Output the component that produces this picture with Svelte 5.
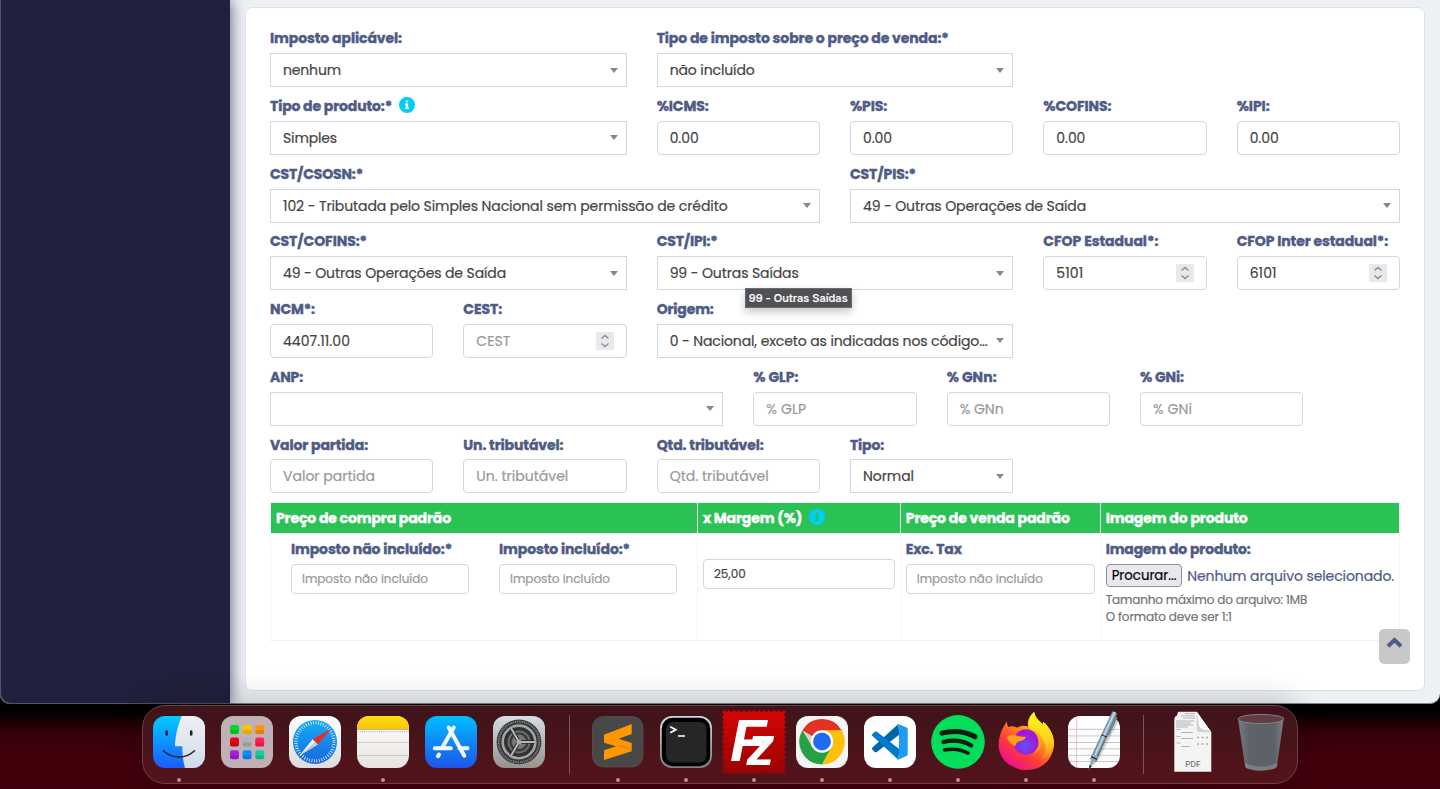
<script>
  const rows = [
    [
      { span: 4, label: 'Imposto aplicável:', lw: 132, kind: 'select', value: 'nenhum', vw: 58 },
      { span: 4, label: 'Tipo de imposto sobre o preço de venda:*', lw: 292, kind: 'select', value: 'não incluído', vw: 85 }
    ],
    [
      { span: 4, label: 'Tipo de produto:*', lw: 122, info: true, kind: 'select', value: 'Simples', vw: 54 },
      { span: 2, label: '%ICMS:', lw: 52, kind: 'input', value: '0.00', vw: 29 },
      { span: 2, label: '%PIS:', lw: 37, kind: 'input', value: '0.00', vw: 29 },
      { span: 2, label: '%COFINS:', lw: 68, kind: 'input', value: '0.00', vw: 29 },
      { span: 2, label: '%IPI:', lw: 33, kind: 'input', value: '0.00', vw: 29 }
    ],
    [
      { span: 6, label: 'CST/CSOSN:*', lw: 93, kind: 'select', value: '102 - Tributada pelo Simples Nacional sem permissão de crédito', vw: 444.5 },
      { span: 6, label: 'CST/PIS:*', lw: 66, kind: 'select', value: '49 - Outras Operações de Saída', vw: 223 }
    ],
    [
      { span: 4, label: 'CST/COFINS:*', lw: 97, kind: 'select', value: '49 - Outras Operações de Saída', vw: 223 },
      { span: 4, label: 'CST/IPI:*', lw: 61, kind: 'select', value: '99 - Outras Saídas', vw: 129, tip: true },
      { span: 2, label: 'CFOP Estadual*:', lw: 115, kind: 'number', value: '5101', vw: 27 },
      { span: 2, label: 'CFOP Inter estadual*:', lw: 151.5, kind: 'number', value: '6101', vw: 27 }
    ],
    [
      { span: 2, label: 'NCM*:', lw: 45, kind: 'input', value: '4407.11.00', vw: 67 },
      { span: 2, label: 'CEST:', lw: 39, kind: 'number', placeholder: 'CEST', vw: 34 },
      { span: 4, label: 'Origem:', lw: 57, kind: 'select', value: '0 - Nacional, exceto as indicadas nos código...', vw: 318 }
    ],
    [
      { span: 5, label: 'ANP:', lw: 33, kind: 'select', value: '', vw: 0 },
      { span: 2, label: '% GLP:', lw: 45, kind: 'input', placeholder: '% GLP', vw: 40 },
      { span: 2, label: '% GNn:', lw: 50, kind: 'input', placeholder: '% GNn', vw: 44 },
      { span: 2, label: '% GNi:', lw: 44, kind: 'input', placeholder: '% GNi', vw: 39 }
    ],
    [
      { span: 2, label: 'Valor partida:', lw: 98, kind: 'input', placeholder: 'Valor partida', vw: 92 },
      { span: 2, label: 'Un. tributável:', lw: 100, kind: 'input', placeholder: 'Un. tributável', vw: 92 },
      { span: 2, label: 'Qtd. tributável:', lw: 107, kind: 'input', placeholder: 'Qtd. tributável', vw: 99 },
      { span: 2, label: 'Tipo:', lw: 34, kind: 'select', value: 'Normal', vw: 51 }
    ]
  ];

  const tiles = [
    ['#00d92c', '#ffc400', '#ff9500'],
    ['#e40613', '#a9b3b8', '#ff1f52'],
    ['#a51fd9', '#0a8cff', '#17cf98']
  ];
  const dockGroups = [
    [
      { id: 'finder', open: true },
      { id: 'launchpad' },
      { id: 'safari' },
      { id: 'notes', open: true },
      { id: 'appstore' },
      { id: 'settings' }
    ],
    [
      { id: 'sublime', open: true },
      { id: 'terminal', open: true },
      { id: 'filezilla', open: true },
      { id: 'chrome', open: true },
      { id: 'vscode', open: true },
      { id: 'spotify', open: true },
      { id: 'firefox', open: true },
      { id: 'textedit', open: true }
    ],
    [{ id: 'pdf' }, { id: 'trash' }]
  ];

  // Tracks a run of text so that it fills the given width.
  function fit(node, width) {
    const natural = node.getBoundingClientRect().width;
    const n = node.textContent.length;
    if (width && n) node.style.letterSpacing = `${(width - natural) / n}px`;
  }
</script>

{#snippet info()}
  <svg class="info" viewBox="0 0 16 16"><path fill-rule="evenodd" d="M8 0a8 8 0 1 1 0 16A8 8 0 0 1 8 0ZM6.9 3.4v2.2h2.2V3.4ZM6 6.6v1.3h.8v2.9H6v1.3h4v-1.3h-.8V6.6Z" /></svg>
{/snippet}

<div class="desktop">
  <div class="window">
    <aside></aside>
    <main>
      <section class="card">
        {#each rows as row}
          <div class="row">
            {#each row as f}
              <div class="field s{f.span}">
                <div class="label"><span use:fit={f.lw}>{f.label}</span>{#if f.info}{@render info()}{/if}</div>
                <div class="control {f.kind}" class:muted={f.placeholder}>
                  <span use:fit={f.vw}>{f.value ?? f.placeholder}</span>
                  {#if f.kind === 'select'}<i class="caret"></i>{/if}
                  {#if f.kind === 'number'}
                    <svg class="spin" viewBox="0 0 18 18"><path d="M5.5 6.5 9 3.5l3.5 3M5.5 11.5l3.5 3 3.5-3" /></svg>
                  {/if}
                  {#if f.tip}<div class="tooltip"><span use:fit={99}>{f.value}</span></div>{/if}
                </div>
              </div>
            {/each}
          </div>
        {/each}

        <div class="table">
          <div class="th"><span use:fit={175}>Preço de compra padrão</span></div>
          <div class="th"><span use:fit={99.5}>x Margem (%)</span>{@render info()}</div>
          <div class="th"><span use:fit={164}>Preço de venda padrão</span></div>
          <div class="th"><span use:fit={142}>Imagem do produto</span></div>
          <div class="td pair">
            <div>
              <div class="label"><span use:fit={161}>Imposto não incluído:*</span></div>
              <div class="control small muted"><span use:fit={126}>Imposto não incluído</span></div>
            </div>
            <div>
              <div class="label"><span use:fit={131}>Imposto incluído:*</span></div>
              <div class="control small muted"><span use:fit={100}>Imposto incluído</span></div>
            </div>
          </div>
          <div class="td margin">
            <div class="control small"><span use:fit={32}>25,00</span></div>
          </div>
          <div class="td">
            <div class="label"><span use:fit={56}>Exc. Tax</span></div>
            <div class="control small muted"><span use:fit={126}>Imposto não incluído</span></div>
          </div>
          <div class="td">
            <div class="label"><span use:fit={145}>Imagem do produto:</span></div>
            <div class="file">
              <button><span use:fit={65}>Procurar...</span></button>
              <span use:fit={207}>Nenhum arquivo selecionado.</span>
            </div>
            <p><span use:fit={201.5}>Tamanho máximo do arquivo: 1MB</span></p>
            <p><span use:fit={126}>O formato deve ser 1:1</span></p>
          </div>
        </div>
      </section>
      <div class="totop">
        <svg viewBox="0 0 17 12"><path d="M2 9.200 8.500 3l6.500 6.200" /></svg>
      </div>
    </main>
  </div>

  <nav class="dock">
    {#each dockGroups as group, g}
      {#if g > 0}<div class="sep" class:last={g === 2}></div>{/if}
      {#each group as app}
        <div class="app">
          <svg viewBox="0 0 68 68">
            {#if app.id === 'finder'}
              <defs>
                <linearGradient id="fa" x2="0" y2="1"><stop stop-color="#00cbff" /><stop offset="1" stop-color="#1c5cff" /></linearGradient>
                <linearGradient id="fb" x2="0" y2="1"><stop stop-color="#f1f0f3" /><stop offset="1" stop-color="#d0dbe8" /></linearGradient>
                <clipPath id="sq"><rect x="8" y="8" width="52" height="52" rx="12" /></clipPath>
              </defs>
              <g clip-path="url(#sq)">
                <path fill="url(#fa)" d="M8 8h52v52H8z" />
                <path fill="url(#fb)" d="M36.7 8C33 17 30.300 27 30 38.300h7.300C37.300 45 38 53 40 60h20V8Z" />
              </g>
              <path fill="none" stroke="#202733" stroke-width="2.600" stroke-linecap="round" d="M21.700 23.500v2.900M46.200 23.500v2.900" />
              <path fill="none" stroke="#202733" stroke-width="1.600" stroke-linecap="round" d="M18.500 42.800c8.500 8.400 22.500 8.400 31 0" />
            {:else if app.id === 'launchpad'}
              <rect x="8" y="8" width="52" height="52" rx="12" fill="#bfb1b5" />
              {#each tiles as line, r}
                {#each line as c, k}
                  <rect x={17 + k * 12.6} y={17 + r * 12.6} width="9" height="9" rx="2.2" fill={c} />
                  <rect x={17 + k * 12.6} y={22 + r * 12.6} width="9" height="4" rx="2" fill="#000" opacity=".12" />
                {/each}
              {/each}
            {:else if app.id === 'safari'}
              <defs>
                <linearGradient id="sa" x2="0" y2="1"><stop stop-color="#fff" /><stop offset="1" stop-color="#dcdcdc" /></linearGradient>
                <linearGradient id="sb" x2="0" y2="1"><stop stop-color="#16adf3" /><stop offset="1" stop-color="#1767e0" /></linearGradient>
              </defs>
              <rect x="8" y="8" width="52" height="52" rx="12" fill="url(#sa)" />
              <circle cx="34" cy="33.900" r="22" fill="url(#sb)" />
              <circle cx="34" cy="33.900" r="19" fill="none" stroke="#e5f5ff" stroke-width="3.300" stroke-dasharray=".8 1.690" />
              <path fill="#ed2a22" d="m50.500 20.800-18.800 10.400 5 5.200Z" />
              <path fill="#f7f7f7" d="m18.500 47.500 13.200-16.300 5 5.200Z" />
              <path fill="#c3cbd3" d="m18.500 47.500 15.700-13.700 2.500 2.600Z" />
            {:else if app.id === 'notes'}
              <defs><linearGradient id="na" x2="0" y2="1"><stop stop-color="#fff" /><stop offset="1" stop-color="#e6e3df" /></linearGradient>
              <linearGradient id="nb" x2="0" y2="1"><stop stop-color="#ffdb16" /><stop offset="1" stop-color="#fcc800" /></linearGradient></defs>
              <g clip-path="url(#sq)">
                <path fill="url(#na)" d="M8 8h52v52H8z" />
                <path fill="url(#nb)" d="M8 8h52v13H8z" />
                <path stroke="#b79d58" stroke-width=".8" d="M8 21.400h52" />
                <path stroke="#aaa7a2" stroke-width="1.300" stroke-dasharray=".8 1.300" d="M9 23.600h51" />
                <path stroke="#c9c7c4" stroke-width=".8" d="M8 34.500h52M8 47.500h52" />
              </g>
            {:else if app.id === 'appstore'}
              <defs><linearGradient id="as" x2="0" y2="1"><stop stop-color="#00bdff" /><stop offset="1" stop-color="#1c55ea" /></linearGradient></defs>
              <rect x="8" y="8" width="52" height="52" rx="12" fill="url(#as)" />
              <path fill="none" stroke="#f4f9ff" stroke-width="4" stroke-linecap="round" d="M17.800 40.200h16M42.500 40.200h8M36.800 19.500 25.200 39.700M31.700 19.500l15.600 28.200M22 46.500l-1 1.700" />
            {:else if app.id === 'settings'}
              <defs><linearGradient id="se" x2="0" y2="1"><stop stop-color="#d5dee3" /><stop offset="1" stop-color="#96918e" /></linearGradient></defs>
              <rect x="8" y="8" width="52" height="52" rx="12" fill="url(#se)" />
              <circle cx="34" cy="33.900" r="22.400" fill="#38393a" />
              <circle cx="34" cy="33.900" r="20.300" fill="none" stroke="#98999a" stroke-width="2" stroke-dasharray=".8 1.060" />
              <circle cx="34" cy="33.900" r="18" fill="#303132" />
              <circle cx="34" cy="33.900" r="16.300" fill="none" stroke="#a4a5a6" stroke-width="2.600" />
              <circle cx="34" cy="33.900" r="11.500" fill="#6e7072" />
              <circle cx="34" cy="33.900" r="8.500" fill="none" stroke="#3a3c3d" stroke-width="2.400" />
              <circle cx="34" cy="33.900" r="6" fill="#77797b" />
              <path stroke="#2b2c2d" stroke-width="3.800" d="M34 33.900h15.500M34 33.900 26.200 20.500M34 33.900 26.200 47.300" />
              <path stroke="#b6b8b9" stroke-width="2" d="M34 33.900h16M34 33.900 26 20M34 33.900 26 47.800" />
              <circle cx="34" cy="33.900" r="2.500" fill="#aaacae" />
            {:else if app.id === 'sublime'}
              <rect x="8.500" y="8.500" width="50.500" height="50.500" rx="11" fill="#484848" stroke="#5c5556" stroke-width=".7" />
              <path fill="#ff9800" d="M47.700 16v10L34.700 30.700l13 4.300v8.200L20 51.900V42.300l12-4L20 34.700V26.800Z" />
              <path fill="#ee8700" d="m32 38.300 4.800-1.500 10.900 3.200v2.300Z" />
            {:else if app.id === 'terminal'}
              <defs><linearGradient id="te" x2="0" y2="1"><stop stop-color="#cfd9df" /><stop offset="1" stop-color="#83817f" /></linearGradient></defs>
              <rect x="8" y="8" width="52" height="52" rx="12" fill="url(#te)" />
              <rect x="9.800" y="9.800" width="48.400" height="48.400" rx="10.500" fill="#000" />
              <rect x="14" y="14" width="40.500" height="40.500" rx="6.500" fill="#262626" />
              <path fill="none" stroke="#fff" stroke-width="1.700" d="m18.200 18.800 5.600 3-5.600 3M26 28h7" />
            {:else if app.id === 'filezilla'}
              <defs><linearGradient id="fz" x2="0" y2="1"><stop stop-color="#d40505" /><stop offset="1" stop-color="#9d0202" /></linearGradient></defs>
              <rect x="3.800" y="3.800" width="60.400" height="60.400" fill="url(#fz)" />
              <rect x="4" y="4" width="60" height="60" fill="none" stroke="url(#fz)" stroke-width="3.400" stroke-linecap="round" stroke-dasharray="0 5" />
              <text class="fz"><tspan x="10" y="53" font-size="60">F</tspan><tspan x="26.500" y="57" font-size="56">z</tspan></text>
            {:else if app.id === 'chrome'}
              <rect x="8" y="8" width="52" height="52" rx="12" fill="#f5f3f3" />
              <circle cx="34" cy="34.200" r="22.600" fill="#d8d3d0" />
              <path fill="#e33122" d="M14.400 22.300A22.600 22.600 0 0 1 53.600 22.300L34 34Z" />
              <path fill="#ffc107" d="M53.600 22.300A22.600 22.600 0 0 1 34 56.200L43.600 39 34 22.300Z" />
              <path fill="#25a044" d="M34 56.200A22.600 22.600 0 0 1 14.400 22.300L24.500 39.200 43.600 39Z" />
              <circle cx="34" cy="33.500" r="11.200" fill="#fff" />
              <circle cx="34" cy="33.500" r="8.900" fill="#226af0" />
            {:else if app.id === 'vscode'}
              <rect x="8" y="8" width="52" height="52" rx="12" fill="#fff" />
              <path fill="#0065a9" d="m42.300 16 1.200 10.400-22.700 17.500c-.6.400-1.400.4-2 0l-2.300-2.100c-.7-.6-.7-1.600 0-2.200Z" />
              <path fill="#007acc" d="m42.300 51.700 1.200-10.400-22.700-17.500c-.6-.4-1.400-.4-2 0l-2.300 2.100c-.7.600-.7 1.600 0 2.200Z" />
              <path fill="#1f9cf0" d="M42.300 16c-.6.600-.4 1.200.6 1.800v32c-1 .6-1.200 1.300-.6 1.900l8.100-3.600c.8-.4 1.300-1 1.300-1.900V21.400c0-.9-.5-1.500-1.300-1.900Z" />
            {:else if app.id === 'spotify'}
              <circle cx="34" cy="33.900" r="26.800" fill="#02de5a" />
              <g fill="none" stroke="#111a14" stroke-linecap="round">
                <path stroke-width="5" d="M18 25.200c11.500-2.900 23.300-1.700 33 3.600" />
                <path stroke-width="4.300" d="M19.500 34c10-2.500 19.500-1.300 27.700 3.500" />
                <path stroke-width="3.500" d="M20.500 42c8.500-1.800 16.500-.8 23.700 3.200" />
              </g>
            {:else if app.id === 'firefox'}
              <defs>
                <linearGradient id="ff" x1=".85" y1=".1" x2=".25" y2=".95"><stop stop-color="#fff230" /><stop offset=".35" stop-color="#ff9a16" /><stop offset=".67" stop-color="#ff4036" /><stop offset="1" stop-color="#ee1189" /></linearGradient>
                <radialGradient id="fg" cx=".45" cy=".65"><stop stop-color="#654dfa" /><stop offset="1" stop-color="#a217d4" /></radialGradient>
                <linearGradient id="fh" x2="0" y2="1"><stop stop-color="#fff51b" /><stop offset=".6" stop-color="#ffd01d" /><stop offset="1" stop-color="#ff7a24" /></linearGradient>
              </defs>
              <path fill="url(#ff)" d="M14.800 13.500c.2 3 .8 4.300 1.800 5.400 2.800-.9 5.600-.7 8.400.8 4-2.400 7-2.600 11-1.200C35 12 38.500 6.500 42.200 4c.8 5 4 8 8.400 12 .7-.3.7-1.300.5-2.300C57.500 19 62 27 62 35.300 62 51 50 62 34.800 62S6.700 51.500 6.700 37c0-8 2.600-15.500 8.100-23.500Z" />
              <path fill="url(#fh)" d="M42.200 4c.8 5 4 8 8.400 12 .7-.3.7-1.300.5-2.300C58 19.500 62 27 62 35.500c-.5 8-6 14-14 16.500 5-5 7-11 4.500-17-2-5-8-9-14.500-13.500C34.500 14 38.500 7 42.200 4Z" />
              <circle cx="34" cy="34" r="12.700" fill="url(#fg)" />
              <path fill="#ff9d1c" d="M14.800 29.500c3-2.500 7-3 10.700-1.800 3 1 5.500 1.200 8.500 1-1 3-4 4-6.500 4.500-2 .5-4 2-4 5-3-1-7-4.500-8.700-8.700Z" />
              <path fill="#ffa51a" d="M40.500 22c4 1.500 7.500 4 9 7.500 2 7-2.500 14-7.500 16 3.500-4 5-8 4.500-12.500-.6-4-3-8-6-11Z" opacity=".85" />
            {:else if app.id === 'textedit'}
              <defs><linearGradient id="pe"><stop stop-color="#496779" /><stop offset=".45" stop-color="#c8e2f2" /><stop offset="1" stop-color="#3c5262" /></linearGradient></defs>
              <g clip-path="url(#sq)">
                <path fill="#fdfdfd" d="M8 8h52v52H8z" />
                <path stroke="#bdbdbf" stroke-width=".8" d="M8 21.300h52M8 27.900h52M8 34.500h52M8 40.900h52M8 47.300h52M8 53.500h52" />
                <path stroke="#f5a9a9" stroke-width=".8" d="M16.700 8v52" />
              </g>
              <g transform="translate(28.300 62.700) rotate(24.500) scale(1.150 1) translate(-28.300 -62.700)">
                <path fill="#222" opacity=".2" d="M30 58 32.500 48 34.500 3h-3Z" />
                <path fill="url(#pe)" d="M25.500 51 25.900-1q2.400-2 4.800 0l.4 52Z" />
                <path fill="#9aa9b3" d="m25.500 46 2.800 16.700L31.100 46Z" />
                <path fill="#26313a" d="m27.300 57 1 5.700 1-5.700ZM25.500 48h5.600v1.400h-5.600zM25.500 24h5.600v1h-5.600z" />
                <path fill="#718795" d="M30.500 2h1.700v20h-1.700z" />
              </g>
            {:else if app.id === 'pdf'}
              <path fill="#f4f4f4" d="M19 3.700h18.700l14.600 20.600v39.400h-37V11l1-2.500 1.700-1Z" />
              <path fill="#d3d3d3" d="M37.700 3.700v17q0 3.600 3.600 3.600h11Z" />
              <path fill="#fff" d="M37.700 3.700 52.300 24.300q-2-2.300-8-3-4-.6-4.300-5Z" />
              <path fill="none" stroke="#9a9a9a" stroke-width=".7" d="M26 5.500h10M22 7.800h14M24 10h12M17 13h18M17 15h15M17 17h17M17 19h12M17.500 21.500h4M22 24.500h12M17.500 28.500h4M22 30.500h12M17.500 35h4M22 38.500h9" />
              <path fill="none" stroke="#aaa" stroke-width="1.300" stroke-dasharray="2 2.500" d="M38 29.500h12M38 36h12" />
              <text class="pdf" x="34" y="59" text-anchor="middle">PDF</text>
            {:else}
              <defs><linearGradient id="tr"><stop stop-color="#757b80" /><stop offset=".25" stop-color="#5c6268" /><stop offset=".8" stop-color="#5c6267" /><stop offset="1" stop-color="#7a8084" /></linearGradient></defs>
              <path fill="url(#tr)" d="M11 10.500 18 58q.6 2 2.800 2.700 13.200 4 26.400 0 2.200-.7 2.800-2.700l6.700-47.500Z" />
              <path fill="#a5abb0" opacity=".4" d="M18 55q16 7 32.300 0L50 58q-.6 2-2.800 2.700-13.200 4-26.400 0Q18.600 60 18 58Z" />
              <ellipse cx="33.900" cy="11" rx="22.700" ry="4.600" fill="#633b45" stroke="#858a8f" stroke-width=".9" />
            {/if}
          </svg>
          {#if app.open}<i class="dot"></i>{/if}
        </div>
      {/each}
    {/each}
  </nav>
</div>

<style>
  :global(body) { margin: 0; background: #3b0009; }
  * { box-sizing: border-box; }
  .desktop {
    height: 789px; overflow: hidden;
    background: linear-gradient(#000 0 712px, #1b0004 722px, #35000a 734px, #43000b 760px, #41000b);
    font: 400 14px/20px Poppins, Inter, sans-serif;
    color: #444;
  }
  span { white-space: nowrap; }
  .window {
    height: 704px; display: flex; overflow: hidden; border-radius: 0 0 10px 10px;
    position: relative; background: #edf1f4;
    box-shadow: inset 0 -1px 0 #83838d;
  }
  aside { width: 230px; flex: none; background: #22213d; border-radius: 0 0 0 10px; box-shadow: 0 0 16px rgba(34, 32, 80, .75), inset 1px -1px 0 #53516b; }
  main { flex: 1; padding: 7px 15px 13px; }
  .card {
    height: 684px; padding: 20.1px 9px 0; background: #fff;
    border: 1px solid #dde1e5; border-radius: 7px;
  }
  .row { display: flex; height: 67.72px; }
  .field { padding: 0 15px; flex: none; }
  .s2 { width: 193.33px; } .s4 { width: 386.67px; } .s5 { width: 483.33px; } .s6 { width: 580px; }
  .label { display: flex; height: 25px; padding-top: .15px; font-weight: 700; color: #4f5b85; -webkit-text-stroke: .4px currentColor; }
  .info { width: 16px; height: 16px; margin: 1px 0 0 7px; fill: #00cff5; flex: none; }
  .control {
    position: relative; display: flex; align-items: center; height: 34px;
    padding: 0 12px; border: 1px solid #d2d6de; border-radius: 4px; background: #fff;
    -webkit-text-stroke: .2px currentColor;
  }
  .control.select { border-radius: 0; }
  .muted { color: #999; }
  .caret { margin-left: auto; margin-right: -4px; border: 4px solid transparent; border-top: 5px solid #888; border-bottom: 0; }
  .spin { width: 18px; height: 18px; margin-left: auto; background: #e9e9ed; fill: none; stroke: #8b8b97; stroke-width: 1.5; }
  .tooltip {
    position: absolute; left: 87px; top: 31px; width: 107px; height: 20px; padding: 0 3px; z-index: 2;
    background: #505154; border: 1px solid #6b6c6e; color: #fff; font: 500 11px/18px Inter, sans-serif;
    box-shadow: 0 4px 9px rgba(0, 0, 0, .22);
  }
  .table {
    display: grid; grid-template-columns: 426.9px 202.9px 199.9px 300.3px; grid-template-rows: 31px 107px;
    width: 1130px; margin: -.14px 15px 0; border-top: 1px solid #f4f4f4;
  }
  .th {
    display: flex; align-items: center; padding: 0 5px; background: #2ac155; color: #fff; font-weight: 700;
    -webkit-text-stroke: .4px currentColor; border-left: 1px solid #f4f4f4; border-bottom: 1px solid #f4f4f4;
  }
  .info { -webkit-text-stroke: 0; }
  .th .info { margin: -2px 0 0 7px; }
  .th:nth-child(4), .td:last-child { border-right: 1px solid #f4f4f4; }
  .td { padding: 5px 5px 0; border-left: 1px solid #f4f4f4; border-bottom: 1px solid #f0f0f0; }
  .pair { display: grid; grid-template-columns: 178px 178px; column-gap: 30px; padding-left: 20px; }
  .control.small { height: 30px; padding: 0 10px; font-size: 12px; }
  .margin { padding-top: 25px; }
  .file { display: flex; align-items: center; height: 24px; gap: 5.500px; color: #4f5b85; -webkit-text-stroke: .2px currentColor; }
  button {
    width: 76px; height: 23px; padding: 1px 5px 0; border: 1px solid #8f8f9d; border-radius: 4px; margin-top: -1px;
    background: #e9e9ed; color: #000; font: 400 13.300px/20px Poppins, Inter, sans-serif; text-align: left; flex: none;
  }
  p { margin: 0; font-size: 12px; line-height: 17px; color: #737373; -webkit-text-stroke: .2px currentColor; }
  .file + p { margin-top: 3px; }
  .totop {
    position: absolute; left: 1379px; top: 629px; width: 31px; height: 35px; border-radius: 5px;
    background: #c8c8c8; padding: 8px 7px;
  }
  .totop svg { display: block; width: 17px; height: 12px; fill: none; stroke: #4f5b85; stroke-width: 4; }
  .dock {
    position: relative; display: flex; width: 1156px; height: 79px; margin: 1px 0 0 142px; padding: 2px 2px 0;
    border: 1px solid #704048; border-radius: 23px;
    background: linear-gradient(#3e141a, #55131b);
    box-shadow: 0 0 30px 4px rgba(0, 0, 0, .22);
  }
  .app { width: 68px; display: flex; flex-direction: column; align-items: center; }
  .app svg { width: 68px; height: 68px; display: block; flex: none; }
  .dot { width: 4px; height: 4px; border-radius: 2px; margin-top: 2px; background: #c98c95; }
  .sep { width: 31px; height: 59px; margin-top: 7px; background: linear-gradient(90deg, transparent 16px, #81525a 16px 17px, transparent 17px); }
  .sep.last { background: linear-gradient(90deg, transparent 15px, #81525a 15px 16px, transparent 16px); }
  .fz { font-family: "Liberation Sans", sans-serif; font-weight: 700; font-style: italic; fill: #fff; }
  .pdf { font: 500 8px Inter, sans-serif; fill: #707070; }
</style>
